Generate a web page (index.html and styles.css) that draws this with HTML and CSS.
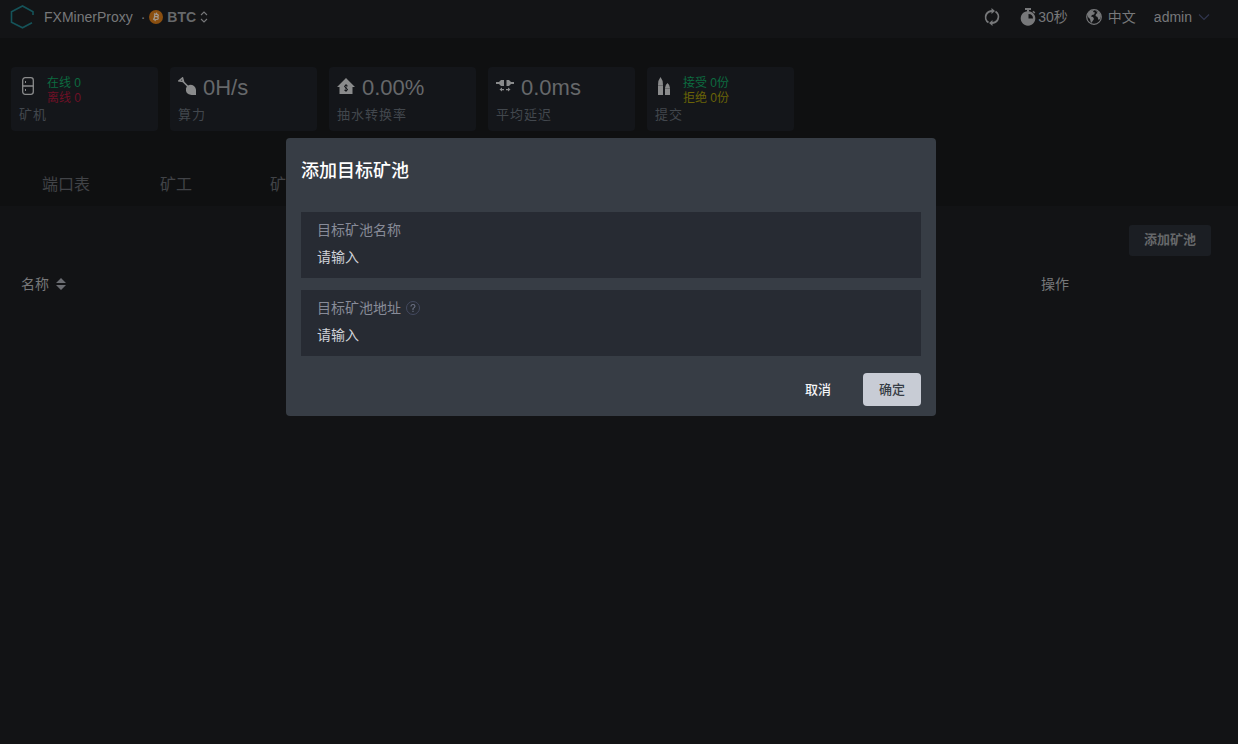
FILE: index.html
```html
<!DOCTYPE html>
<html lang="zh">
<head>
<meta charset="utf-8">
<meta name="viewport" content="width=device-width, initial-scale=1">
<title>FXMinerProxy</title>
<link rel="stylesheet" href="styles.css">
</head>
<body>
<header class="topbar">
  <div class="brand">
    <svg class="logo" viewBox="0 0 24 24" width="24" height="24"><path d="M23 10V6.800L12.500 1 1.500 6.800v10.400l11 5.600 9.500-5"/></svg>
    <span>FXMinerProxy</span>
    <button class="coin" type="button">
      <span class="dot">·</span>
      <svg viewBox="0 0 14 14" width="14" height="14"><circle cx="7" cy="7" r="7" fill="#8a4f10"/><path d="M5.900 3.600 5 10M4.900 3.900l3.200.4c1.900.4 1.600 2.500-.3 2.400L5.800 6.500M7.800 6.700c2.300.4 1.700 3-.5 2.800L4 9.100M7.700 2.600l-.3 1.700M6.300 9.500 6 11.200" fill="none" stroke="#a39a90" stroke-width="1.200"/></svg>
      <b>BTC</b>
      <svg class="line" viewBox="0 0 8 12" width="8" height="12"><path d="M1 4l3-3 3 3M1 8l3 3 3-3"/></svg>
    </button>
  </div>
  <nav class="tools">
    <button type="button" class="reload" aria-label="刷新"><svg class="refresh" viewBox="0 0 16 18" width="16" height="18"><path d="M4.500 14.500A6.300 6.300 0 0 1 2.200 6.500Q4 3 8.500 3M11.500 3.500a6.300 6.300 0 0 1 2.300 8Q12 15 7.500 15"/><path class="solid" d="M7.500 0 11 3 7.500 6zM8.500 12 5 15l3.500 3z"/></svg></button>
    <button type="button" class="timer"><svg viewBox="0 0 16 18" width="16" height="18"><path d="M5 0h6v2H9v1.200A7.300 7.300 0 1 1 7 3.200V2H5z" fill="#77787a"/><path d="M13 3.200l1.800 1.800" stroke="#77787a" stroke-width="1.500"/><path d="M8.500 6v4.500h4.500A4.600 4.600 0 0 0 8.500 6z" fill="#131416"/></svg><span>30秒</span></button>
    <button type="button" class="lang"><svg viewBox="0 0 16 16" width="16" height="16"><circle cx="8" cy="8" r="7.300" fill="none" stroke="#77787a" stroke-width="1.200"/><path d="M1.500 5 4 2l4-1-1 2 2 .5-1 2-2 .5-1 1.500 2 .5 1 2-2 3-1 1-1-4-2-2zM10 2l3 1 2 4-1 3-1.500 1-1-3-2-1 .5-2 1.500-1z" fill="#77787a"/></svg><span>中文</span></button>
    <button type="button" class="user"><span>admin</span><svg viewBox="0 0 12 8" width="12" height="8"><path d="M1 1.500l5 5 5-5" fill="none" stroke="#30344c" stroke-width="1.200"/></svg></button>
  </nav>
</header>

<section class="overview">
  <div class="cards">
    <article class="card">
      <div class="figure">
        <svg viewBox="0 0 18 18" width="18" height="18"><rect x="3.700" y=".7" width="10.600" height="16.600" rx="2.500" fill="none" stroke="#8a8b8c" stroke-width="1.300"/><path d="M4 9h10.500" stroke="#8a8b8c" stroke-width="1.500"/><path d="M6.500 4v2M6.500 12v2" stroke="#8a8b8c"/></svg>
        <p class="pair"><span class="green">在线 0</span><span class="red">离线 0</span></p>
      </div>
      <h2>矿机</h2>
    </article>
    <article class="card">
      <div class="figure">
        <svg viewBox="0 0 18 18" width="18" height="18"><path d="M1 3.800 4.500 1l1 3.600zM4.500 4l6 6" fill="none" stroke="#8a8b8c" stroke-width="1.600"/><path d="M8 11.500 9 9l3-1.200q5 .2 6 4.700v5.500h-4.500q-6.500-1-5.500-6.500z" fill="#8a8b8c"/></svg>
        <strong>0H/s</strong>
      </div>
      <h2>算力</h2>
    </article>
    <article class="card">
      <div class="figure">
        <svg viewBox="0 0 18 18" width="18" height="18"><path d="M9 1l9 9h-2.500v7h-13v-7H0z" fill="#8a8b8c"/><path d="M10.700 9Q9 7.600 7.800 8.700T9 11t1.300 2.200T7.300 13.200M9 7.200v7.600" fill="none" stroke="#14161a" stroke-width="1"/></svg>
        <strong>0.00%</strong>
      </div>
      <h2>抽水转换率</h2>
    </article>
    <article class="card">
      <div class="figure">
        <svg viewBox="0 0 18 18" width="18" height="18"><path d="M0 5h3l2-2h3v6H5L3 7H0zM18 5h-3l-2-2h-2.500v6H13l2-2h3z" fill="#8a8b8c"/><path d="M3.500 12.500 6 10.500V12h2v1.200H6v1.300zM14.500 12.500l-2.500-2V12h-2v1.200h2v1.300z" fill="#8a8b8c"/></svg>
        <strong>0.0ms</strong>
      </div>
      <h2>平均延迟</h2>
    </article>
    <article class="card">
      <div class="figure">
        <svg viewBox="0 0 18 18" width="18" height="18"><path d="M3 8Q3 3 5.500 0 8 3 8 8v10H3zM10 11q0-3 2.500-5 2.500 2 2.500 5v7h-5z" fill="#8a8b8c"/><path d="M3 8.500h5M10 11.500h5" stroke="#5a5c5e" stroke-width=".7"/></svg>
        <p class="pair"><span class="green">接受 0份</span><span class="yellow">拒绝 0份</span></p>
      </div>
      <h2>提交</h2>
    </article>
  </div>
  <nav class="tabs">
    <a href="#ports">端口表</a>
    <a href="#workers">矿工</a>
    <a href="#pools">矿池</a>
  </nav>
</section>

<main class="content">
  <div class="actions"><button class="add" type="button">添加矿池</button></div>
  <table class="pools">
    <thead>
      <tr>
        <th class="name" scope="col">名称 <svg viewBox="0 0 10 12" width="10" height="12"><path d="M0 5l5-5 5 5zM0 7h10l-5 5z" fill="#6b6d72"/></svg></th>
        <th scope="col">操作</th>
      </tr>
    </thead>
  </table>
</main>

<div class="overlay">
  <form class="dialog" role="dialog" aria-labelledby="dialog-title">
    <h1 id="dialog-title">添加目标矿池</h1>
    <div class="field">
      <label for="pool-name">目标矿池名称</label>
      <input id="pool-name" type="text" placeholder="请输入">
    </div>
    <div class="field">
      <label for="pool-address">目标矿池地址 <svg viewBox="0 0 14 14" width="14" height="14"><circle cx="7" cy="7" r="6.500"/><path d="M5 5.500Q5 3.500 7 3.500t2 1.800Q9 6.300 7 7.600v1.300M7 9.800v1.200" class="mark"/></svg></label>
      <input id="pool-address" type="text" placeholder="请输入">
    </div>
    <div class="buttons">
      <button class="cancel" type="button">取消</button>
      <button class="confirm" type="submit">确定</button>
    </div>
  </form>
</div>
</body>
</html>
```
FILE: styles.css
```css
* { box-sizing: border-box; }

body {
  margin: 0;
  min-height: 100vh;
  background: #121315;
  color: #77787a;
  font: 14px/20px "Liberation Sans", "Noto Sans CJK SC", sans-serif;
}

h1, h2, p { margin: 0; font-weight: 400; }
svg { flex: none; }

button, input {
  border: 0;
  padding: 0;
  background: none;
  color: inherit;
  font: inherit;
}

.topbar {
  display: flex;
  justify-content: space-between;
  align-items: center;
  height: 38px;
  padding: 0 28px 4px 10px;
  background: #131416;
}

.brand, .coin, .tools, .tools button { display: flex; align-items: center; }
.brand { gap: 10px; }
.coin { gap: 4px; margin-left: -2px; }
.coin b { color: #66686a; }
.logo { fill: none; stroke: #155359; stroke-width: 1.6; }
.line { fill: none; stroke: #77787a; stroke-width: 1.1; }
.refresh { fill: none; stroke: #77787a; stroke-width: 1.8; }
.refresh .solid { fill: #77787a; stroke: none; }
.tools { gap: 18px; }
.tools .reload { margin-right: 2px; }
.tools .timer { gap: 2px; }
.tools .lang, .tools .user { gap: 6px; }

.overview { background: #0f1011; padding: 29px 11px 0; }
.cards { display: flex; gap: 12px; }

.card {
  flex: 0 0 147px;
  height: 64px;
  padding: 8px;
  border-radius: 4px;
  background: #14161a;
}

.figure { display: flex; align-items: center; height: 30px; gap: 7px; }
.figure svg { margin-bottom: 8px; }
.figure strong { margin-bottom: 4px; color: #66686a; font-size: 22px; line-height: 26px; font-weight: 400; }
.pair { display: flex; flex-direction: column; margin-left: 3px; padding-top: 2px; font-size: 12px; line-height: 15px; }
.green { color: #0c6b40; }
.red { color: #6f1026; }
.yellow { color: #6b6407; }
.card h2 { font-size: 13px; line-height: 20px; letter-spacing: 1px; color: #42474d; }

.tabs { display: flex; height: 75px; padding-top: 33px; }
.tabs a {
  width: 110px;
  color: #414347;
  font-size: 16px;
  line-height: 42px;
  text-align: center;
  text-decoration: none;
}

.content { padding: 19px 27px 0 11px; }
.actions { display: flex; justify-content: flex-end; }
.add {
  height: 31px;
  padding: 0 15px 2px;
  border-radius: 3px;
  background: #1b1e23;
  color: #66686a;
  font-size: 13px;
  font-weight: 700;
}

.pools { width: 100%; margin-top: 18px; border-collapse: collapse; }
.pools th { padding: 0 10px; font-weight: 400; text-align: left; }
.pools .name { width: 85%; }
.pools svg { margin-left: 3px; vertical-align: -1px; }

.overlay {
  position: fixed;
  inset: 0;
  display: flex;
  justify-content: center;
  align-items: flex-start;
  padding: 138px 16px 0 0;
}

.dialog {
  width: 650px;
  max-width: 100%;
  padding: 16px 15px 10px;
  border-radius: 4px;
  background: #373d45;
}

.dialog h1 { margin-bottom: 24px; color: #fff; font-size: 18px; line-height: 34px; font-weight: 500; }
.field {
  display: flex;
  flex-direction: column;
  gap: 7px;
  margin-bottom: 12px;
  padding: 8px 16px 11px;
  background: #272b33;
}
.field label { display: flex; align-items: center; gap: 5px; color: #878b98; }
.field svg { fill: none; stroke: #444a60; }
.field .mark { stroke: #6b7184; stroke-width: 1.1; }
.field input { height: 20px; width: 100%; outline: 0; color: #d5d8df; }
.field input::placeholder { color: #d0d3d9; opacity: 1; }

.buttons { display: flex; justify-content: flex-end; gap: 16px; margin-top: 17px; }
.buttons button { height: 33px; padding: 0 16px; border-radius: 4px; font-size: 13px; font-weight: 500; }
.cancel { color: #f4f5f8; }
.confirm { background: #c8ccd5; color: #373d45; }
```
